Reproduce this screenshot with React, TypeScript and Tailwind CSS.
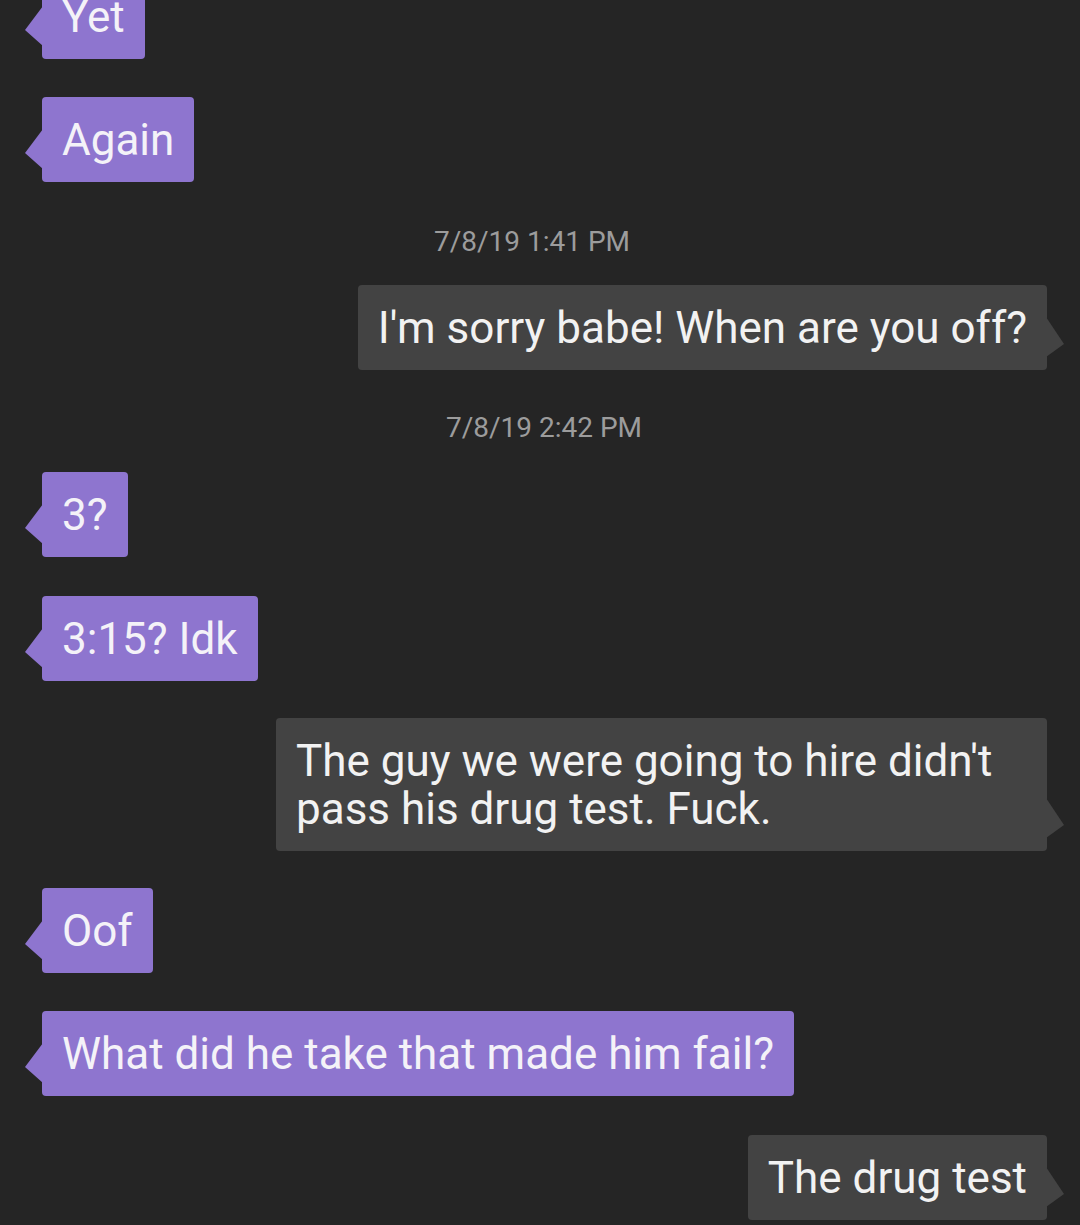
import React from 'react';

const font = { fontFamily: 'Roboto, "Noto Sans", sans-serif' };

// Little pointer on the side of each bubble
function Tail({ side, color }: { side: 'left' | 'right'; color: string }) {
  if (side === 'left') {
    return (
      <svg
        className="absolute left-[-17px] bottom-[13px]"
        width="18"
        height="40"
        viewBox="0 0 18 40"
      >
        <polygon points="18,0 0,24 18,40" fill={color} />
      </svg>
    );
  }
  return (
    <svg
      className="absolute right-[-17px] bottom-[13px]"
      width="18"
      height="40"
      viewBox="0 0 18 40"
    >
      <polygon points="0,0 18,27 0,40" fill={color} />
    </svg>
  );
}

function Received({ text, className = '' }: { text: string; className?: string }) {
  return (
    <div className={`relative self-start ml-[42px] ${className}`}>
      <Tail side="left" color="#8e75cf" />
      <div className="bg-[#8e75cf] rounded-[4px] px-[20px] pt-[19px] pb-[18px] text-[44px] leading-[48px] text-[#f4f2f8] whitespace-nowrap">
        {text}
      </div>
    </div>
  );
}

function Sent({ children, className = '' }: { children: React.ReactNode; className?: string }) {
  return (
    <div className={`relative self-end mr-[33px] ${className}`}>
      <Tail side="right" color="#434343" />
      <div className="bg-[#434343] rounded-[4px] px-[20px] pt-[19px] pb-[18px] text-[44px] leading-[48px] text-[#f2f2f2] whitespace-nowrap">
        {children}
      </div>
    </div>
  );
}

function Stamp({ text, className = '' }: { text: string; className?: string }) {
  return (
    <div className={`text-center text-[28px] leading-[34px] text-[#9c9c9c] ${className}`}>{text}</div>
  );
}

export default function App() {
  return (
    <div className="w-[1080px] h-[1225px] overflow-hidden bg-[#252525]" style={font}>
      <div className="flex flex-col">
        <Received text="Yet" className="mt-[-26px]" />
        <Received text="Again" className="mt-[38px]" />

        <Stamp text="7/8/19 1:41 PM" className="mt-[43px] pr-[16px]" />
        <Sent className="mt-[26px]">I'm sorry babe! When are you off?</Sent>

        <Stamp text="7/8/19 2:42 PM" className="mt-[41px] pl-[8px]" />
        <Received text="3?" className="mt-[27px]" />
        <Received text="3:15? Idk" className="mt-[39px]" />

        <Sent className="mt-[37px] w-[771px]">
          The guy we were going to hire didn't
          <br />
          pass his drug test. Fuck.
        </Sent>

        <Received text="Oof" className="mt-[37px]" />
        <Received text="What did he take that made him fail?" className="mt-[38px]" />

        <Sent className="mt-[39px]">The drug test</Sent>
      </div>
    </div>
  );
}
